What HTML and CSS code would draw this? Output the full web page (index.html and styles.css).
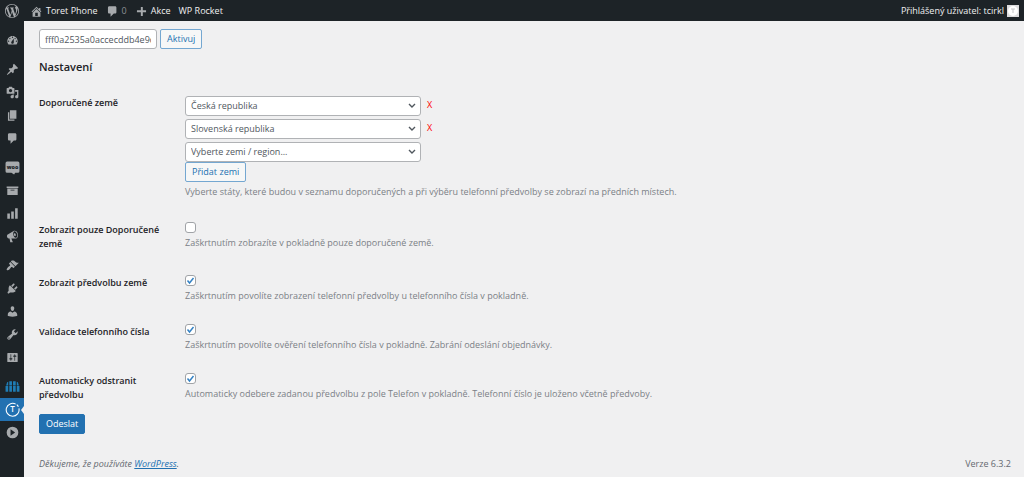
FILE: index.html
```
<!DOCTYPE html>
<html lang="cs">
<head>
    <meta charset="UTF-8">
    <meta name="viewport" content="width=device-width, initial-scale=1.0">
    <title>Toret Phone</title>
    <link rel="stylesheet" href="styles.css">
</head>
<body>
    <header class="adminbar">
        <a class="bar-item bar-logo" href="#" aria-label="WordPress">
            <svg class="icon icon-logo" viewBox="0 0 20 20"><path d="M20 10c0-5.51-4.49-10-10-10C4.48 0 0 4.49 0 10c0 5.52 4.48 10 10 10 5.51 0 10-4.48 10-10zM7.78 15.37L4.37 6.22c.55-.02 1.17-.08 1.17-.08.5-.06.44-1.13-.06-1.11 0 0-1.45.11-2.37.11-.18 0-.37 0-.58-.01C4.12 2.69 6.87 1.11 10 1.11c2.33 0 4.45.87 6.05 2.34-.68-.11-1.65.39-1.65 1.58 0 .74.45 1.36.9 2.1.35.61.55 1.36.55 2.46 0 1.49-1.4 5-1.4 5l-3.03-8.37c.54-.02.82-.17.82-.17.5-.05.44-1.25-.06-1.22 0 0-1.44.12-2.38.12-.87 0-2.33-.12-2.33-.12-.5-.03-.56 1.2-.06 1.22l.92.08 1.26 3.41zM17.41 10c.24-.64.74-1.87.43-4.25.7 1.29 1.05 2.71 1.05 4.25 0 3.29-1.73 6.24-4.4 7.78.97-2.59 1.94-5.2 2.92-7.78zM6.1 18.09C3.12 16.65 1.11 13.53 1.11 10c0-1.3.23-2.48.72-3.59C3.25 10.3 4.67 14.2 6.1 18.09zm4.03-6.63l2.58 6.98c-.86.29-1.76.45-2.71.45-.79 0-1.57-.11-2.29-.33.81-2.38 1.62-4.74 2.42-7.1z"/></svg>
        </a>
        <a class="bar-item" href="#">
            <svg class="icon" viewBox="0 0 20 20"><path d="M16 8.5l1.53 1.53-1.06 1.06L10 4.6l-6.47 6.49-1.06-1.06L10 2.5l4 4v-2h2v4zm-6-2.46l6 5.99V18H4v-5.97zM12 17v-5H8v5h4z"/></svg>
            Toret Phone
        </a>
        <a class="bar-item bar-muted" href="#">
            <svg class="icon" viewBox="0 0 20 20"><path d="M5 2h9c1.1 0 2 .9 2 2v7c0 1.1-.9 2-2 2h-2l-5 5v-5H5c-1.1 0-2-.9-2-2V4c0-1.1.9-2 2-2z"/></svg>
            0
        </a>
        <a class="bar-item" href="#">
            <svg class="icon" viewBox="0 0 20 20"><path d="M17 8v3h-5v6H9v-6H3V8h6V3h3v5h5z"/></svg>
            Akce
        </a>
        <a class="bar-item" href="#">WP Rocket</a>
        <a class="bar-item bar-user" href="#">
            Přihlášený uživatel: tcirkl
            <svg class="avatar" viewBox="0 0 12 12" aria-hidden="true"><rect width="12" height="12" fill="#dcdcde"/><circle cx="6" cy="6" r="5" fill="#fff"/><path d="M4 4h4M6 4v4" stroke="#c3c4c7" stroke-width="1"/></svg>
        </a>
    </header>

    <div class="layout">
        <nav class="menu" aria-label="Hlavní menu">
            <ul class="menu-group">
                <li><a class="menu-item" href="#" aria-label="Nástěnka"><svg class="icon" viewBox="0 0 20 20"><path d="M3.76 16h12.48c1.1-1.37 1.76-3.11 1.76-5 0-4.42-3.58-8-8-8s-8 3.58-8 8c0 1.89.66 3.63 1.76 5zM10 4c.55 0 1 .45 1 1s-.45 1-1 1-1-.45-1-1 .45-1 1-1zM6 6c.55 0 1 .45 1 1s-.45 1-1 1-1-.45-1-1 .45-1 1-1zm8 0c.55 0 1 .45 1 1s-.45 1-1 1-1-.45-1-1 .45-1 1-1zm-5.37 5.55L12 7v6c0 1.1-.9 2-2 2s-2-.9-2-2c0-.57.24-1.08.63-1.45zM4 10c.55 0 1 .45 1 1s-.45 1-1 1-1-.45-1-1 .45-1 1-1zm12 0c.55 0 1 .45 1 1s-.45 1-1 1-1-.45-1-1 .45-1 1-1z"/></svg></a></li>
            </ul>
            <ul class="menu-group">
                <li><a class="menu-item" href="#" aria-label="Příspěvky"><svg class="icon" viewBox="0 0 20 20"><path d="M10.44 3.02l1.82-1.82 6.36 6.35-1.83 1.82c-1.05-.68-2.48-.57-3.41.36l-.75.75c-.92.93-1.04 2.35-.35 3.41l-1.83 1.82-2.41-2.41-2.8 2.79c-.42.42-3.38 2.71-3.8 2.29s1.86-3.39 2.28-3.81l2.79-2.79L4.1 9.36l1.83-1.82c1.05.69 2.48.57 3.4-.36l.75-.75c.93-.92 1.05-2.35.36-3.41z"/></svg></a></li>
                <li><a class="menu-item" href="#" aria-label="Média"><svg class="icon" viewBox="0 0 20 20"><path d="M13 11V4c0-.55-.45-1-1-1h-1.67L9 1H5L3.67 3H2c-.55 0-1 .45-1 1v7c0 .55.45 1 1 1h10c.55 0 1-.45 1-1zM7 4.5c1.38 0 2.5 1.12 2.5 2.5S8.38 9.5 7 9.5 4.5 8.38 4.5 7 5.62 4.5 7 4.5zM14 6h5v10.5c0 1.38-1.12 2.5-2.5 2.5S14 17.88 14 16.5s1.12-2.5 2.5-2.5c.17 0 .34.02.5.05V9h-3V6zm-4 8.05V13h2v3.5c0 1.38-1.12 2.5-2.5 2.5S7 17.88 7 16.5 8.12 14 9.5 14c.17 0 .34.02.5.05z"/></svg></a></li>
                <li><a class="menu-item" href="#" aria-label="Stránky"><svg class="icon" viewBox="0 0 20 20"><path d="M6 15V2h10v13H6zm-1 1h8v2H3V5h2v11z"/></svg></a></li>
                <li><a class="menu-item" href="#" aria-label="Komentáře"><svg class="icon" viewBox="0 0 20 20"><path d="M5 2h9c1.1 0 2 .9 2 2v7c0 1.1-.9 2-2 2h-2l-5 5v-5H5c-1.1 0-2-.9-2-2V4c0-1.1.9-2 2-2z"/></svg></a></li>
            </ul>
            <ul class="menu-group">
                <li><a class="menu-item" href="#" aria-label="WooCommerce"><svg class="icon icon-wide" viewBox="0 0 28 28"><path d="M4 3h20a3 3 0 0 1 3 3v15a3 3 0 0 1-3 3h-5l-2 3-5-3H4a3 3 0 0 1-3-3V6a3 3 0 0 1 3-3z"/><text class="woo-text" x="14" y="17" text-anchor="middle">woo</text></svg></a></li>
                <li><a class="menu-item" href="#" aria-label="Produkty"><svg class="icon" viewBox="0 0 20 20"><path d="M19 4v2H1V4h18zM2 7h16v10H2V7zm11 3V9H7v1h6z"/></svg></a></li>
                <li><a class="menu-item" href="#" aria-label="Analýzy"><svg class="icon" viewBox="0 0 20 20"><path d="M18 18V2h-4v16h4zm-6 0V7H8v11h4zm-6 0v-8H2v8h4z"/></svg></a></li>
                <li><a class="menu-item" href="#" aria-label="Marketing"><svg class="icon" viewBox="0 0 20 20"><path d="M18.15 5.94c.46 1.62.38 3.22-.02 4.48-.42 1.28-1.26 2.18-2.3 2.48-.16.06-.26.06-.4.06-.06.02-.12.02-.18.02-.06.02-.14.02-.22.02h-6.8l2.22 5.5c.02.14-.06.26-.14.34-.08.1-.24.16-.34.16H6.95c-.1 0-.26-.06-.34-.16-.08-.08-.16-.2-.14-.34l-1-5.5H4.25l-.02-.02c-.5.06-1.08-.18-1.54-.62s-.88-1.08-1.06-1.88c-.24-.8-.2-1.56-.02-2.2.18-.62.58-1.08 1.06-1.3l.02-.02 9-5.4c.1-.06.18-.1.24-.16.06-.04.14-.08.24-.12.16-.08.28-.12.5-.18 1.04-.3 2.24.1 3.22.98s1.84 2.24 2.26 3.86zm-2.58 5.98h-.02c.4-.1.74-.34 1.04-.7.58-.7.86-1.76.86-3.04 0-.64-.1-1.3-.28-1.98-.34-1.36-1.02-2.5-1.78-3.24s-1.68-1.1-2.46-.88c-.82.22-1.4.96-1.7 2-.32 1.04-.28 2.36.06 3.72.38 1.36 1 2.5 1.8 3.24.78.74 1.62 1.1 2.48.88zm-2.54-7.08c.22-.04.42-.02.62.04.38.16.76.48 1.02 1s.42 1.2.42 1.78c0 .3-.04.56-.12.8-.18.48-.44.84-.86.94-.34.1-.8-.06-1.14-.4s-.64-.86-.78-1.5c-.18-.62-.12-1.24.02-1.72s.48-.84.82-.94z"/></svg></a></li>
            </ul>
            <ul class="menu-group">
                <li><a class="menu-item" href="#" aria-label="Vzhled"><svg class="icon" viewBox="0 0 20 20"><path d="M14.48 11.06L7.41 3.99l1.5-1.5c.5-.56 2.3-.47 3.51.32 1.21.8 1.43 1.28 2.91 2.1 1.18.64 2.45 1.26 4.45.85zm-.71.71L6.7 4.7 4.93 6.47c-.39.39-.39 1.02 0 1.41l1.06 1.06c.39.39.39 1.03 0 1.42-.6.6-1.43 1.11-2.21 1.69-.35.26-.7.53-1.01.84C1.43 14.23.4 16.08 1.4 17.07c.99 1 2.84-.03 4.18-1.36.31-.31.58-.66.85-1.02.57-.78 1.08-1.61 1.69-2.21.39-.39 1.02-.39 1.41 0l1.06 1.06c.39.39 1.02.39 1.41 0z"/></svg></a></li>
                <li><a class="menu-item" href="#" aria-label="Pluginy"><svg class="icon" viewBox="0 0 20 20"><path d="M13.11 4.36L9.87 7.6 8 5.73l3.24-3.24c.35-.34 1.05-.2 1.56.32.52.51.66 1.21.31 1.55zm-8 1.77l.91-1.12 9.01 9.01-1.19.84c-.71.71-2.63 1.16-3.82 1.16H6.14L4.9 17.26c-.59.59-1.54.59-2.12 0-.59-.58-.59-1.53 0-2.12l1.24-1.24v-3.88c0-1.13.4-3.19 1.09-3.89zm7.26 3.97l3.24-3.24c.34-.35 1.04-.21 1.55.31.52.51.66 1.21.31 1.55l-3.24 3.25z"/></svg></a></li>
                <li><a class="menu-item" href="#" aria-label="Uživatelé"><svg class="icon" viewBox="0 0 20 20"><path d="M10 9.25c-2.27 0-2.73-3.44-2.73-3.44C7 4.02 7.82 2 9.97 2c2.16 0 2.98 2.02 2.71 3.81 0 0-.41 3.44-2.68 3.44zm0 2.57L12.72 10c2.39 0 4.52 2.33 4.52 4.53v2.49s-3.65 1.13-7.24 1.13c-3.65 0-7.24-1.13-7.24-1.13v-2.49c0-2.25 1.94-4.48 4.47-4.48z"/></svg></a></li>
                <li><a class="menu-item" href="#" aria-label="Nástroje"><svg class="icon" viewBox="0 0 20 20"><path d="M16.68 9.77c-1.34 1.34-3.3 1.67-4.95.99l-5.41 6.52c-.99.99-2.59.99-3.58 0s-.99-2.59 0-3.57l6.52-5.42c-.68-1.65-.35-3.61.99-4.95 1.28-1.28 3.12-1.62 4.72-1.06l-2.89 2.89 2.82 2.82 2.86-2.87c.53 1.58.18 3.39-1.08 4.65zM3.81 16.21c.4.39 1.04.39 1.43 0 .4-.4.4-1.04 0-1.43-.39-.4-1.03-.4-1.43 0-.39.39-.39 1.03 0 1.43z"/></svg></a></li>
                <li><a class="menu-item" href="#" aria-label="Nastavení"><svg class="icon" viewBox="0 0 20 20"><path d="M18 16V4c0-.55-.45-1-1-1H3c-.55 0-1 .45-1 1v12c0 .55.45 1 1 1h14c.55 0 1-.45 1-1zM8 11h1c.55 0 1 .45 1 1s-.45 1-1 1H8v1.5c0 .28-.22.5-.5.5s-.5-.22-.5-.5V13H6c-.55 0-1-.45-1-1s.45-1 1-1h1V5.5c0-.28.22-.5.5-.5s.5.22.5.5V11zm5-2h-1c-.55 0-1-.45-1-1s.45-1 1-1h1V5.5c0-.28.22-.5.5-.5s.5.22.5.5V7h1c.55 0 1 .45 1 1s-.45 1-1 1h-1v5.5c0 .28-.22.5-.5.5s-.5-.22-.5-.5V9z"/></svg></a></li>
            </ul>
            <ul class="menu-group">
                <li><a class="menu-item menu-blue" href="#" aria-label="Toret"><svg class="icon icon-wide" viewBox="0 0 28 28"><path d="M8 4h5v8H8zM15 4h5v8h-5zM6 5v7H2l2-6zM22 5v7h4l-2-6z"/><path d="M1 13h5v11H1zM8 13h5v11H8zM15 13h5v11h-5zM22 13h5v11h-5z"/></svg></a></li>
                <li><a class="menu-item menu-active" href="#" aria-label="Toret Phone"><svg class="icon icon-wide" viewBox="0 0 28 28"><path d="M20 4A12 12 0 1 0 26 12" fill="none" stroke="currentColor" stroke-width="2"/><path d="M22 5a12 12 0 0 1 3 4" fill="none" stroke="currentColor" stroke-width="2"/><text class="toret-text" x="14" y="19" text-anchor="middle">T</text></svg></a></li>
                <li><a class="menu-item" href="#" aria-label="Sbalit menu"><svg class="icon" viewBox="0 0 20 20"><path fill-rule="evenodd" d="M10 1a9 9 0 1 1 0 18 9 9 0 0 1 0-18zM7 5v10l7-5z"/></svg></a></li>
            </ul>
        </nav>

        <div class="content">
            <main>
                <form class="license">
                    <input class="field license-key" type="text" value="fff0a2535a0accecddb4e9c8" aria-label="Licenční klíč">
                    <button class="btn" type="button">Aktivuj</button>
                </form>

                <h2 class="title">Nastavení</h2>

                <form class="settings">
                    <div class="row">
                        <label class="row-label" for="country-1">Doporučené země</label>
                        <div class="row-body row-countries">
                            <div class="country">
                                <select class="field select" id="country-1">
                                    <option>Česká republika</option>
                                </select>
                                <button class="remove" type="button">X</button>
                            </div>
                            <div class="country">
                                <select class="field select" aria-label="Druhá země">
                                    <option>Slovenská republika</option>
                                </select>
                                <button class="remove" type="button">X</button>
                            </div>
                            <div class="country">
                                <select class="field select" aria-label="Další země">
                                    <option>Vyberte zemi / region...</option>
                                </select>
                            </div>
                            <button class="btn" type="button">Přidat zemi</button>
                            <p class="desc">Vyberte státy, které budou v seznamu doporučených a při výběru telefonní předvolby se zobrazí na předních místech.</p>
                        </div>
                    </div>
                    <div class="row">
                        <label class="row-label" for="only">Zobrazit pouze Doporučené země</label>
                        <div class="row-body">
                            <input class="check" type="checkbox" id="only">
                            <p class="desc">Zaškrtnutím zobrazíte v pokladně pouze doporučené země.</p>
                        </div>
                    </div>
                    <div class="row">
                        <label class="row-label" for="prefix">Zobrazit předvolbu země</label>
                        <div class="row-body">
                            <input class="check" type="checkbox" id="prefix" checked>
                            <p class="desc">Zaškrtnutím povolíte zobrazení telefonní předvolby u telefonního čísla v pokladně.</p>
                        </div>
                    </div>
                    <div class="row">
                        <label class="row-label" for="validate">Validace telefonního čísla</label>
                        <div class="row-body">
                            <input class="check" type="checkbox" id="validate" checked>
                            <p class="desc">Zaškrtnutím povolíte ověření telefonního čísla v pokladně. Zabrání odeslání objednávky.</p>
                        </div>
                    </div>
                    <div class="row row-last">
                        <label class="row-label" for="strip">Automaticky odstranit předvolbu</label>
                        <div class="row-body">
                            <input class="check" type="checkbox" id="strip" checked>
                            <p class="desc">Automaticky odebere zadanou předvolbu z pole Telefon v pokladně. Telefonní číslo je uloženo včetně předvoby.</p>
                        </div>
                    </div>
                    <button class="btn btn-primary" type="button">Odeslat</button>
                </form>
            </main>

            <footer class="footer">
                <em>Děkujeme, že používáte <a href="#">WordPress</a>.</em>
                <span>Verze 6.3.2</span>
            </footer>
        </div>
    </div>
</body>
</html>
```
FILE: styles.css
```
* {
    margin: 0;
    padding: 0;
    box-sizing: border-box;
}

body {
    font-family: "Segoe UI", "Open Sans", "Noto Sans", sans-serif;
    font-size: 9px;
    line-height: 14px;
    color: #3c434a;
    background: #f0f0f1;
    min-height: 100vh;
    display: flex;
    flex-direction: column;
}

button,
input,
select {
    font: inherit;
}

.icon {
    width: 13px;
    height: 13px;
    fill: currentColor;
    flex: none;
}

.icon-logo {
    width: 14px;
    height: 14px;
}

.icon-wide {
    width: 15px;
    height: 15px;
}

/* top bar */
.adminbar {
    display: flex;
    align-items: center;
    gap: 8px;
    height: 21px;
    padding: 1px 5px 0;
    background: #1d2327;
}

.bar-item {
    display: flex;
    align-items: center;
    gap: 3px;
    color: #f0f0f1;
    text-decoration: none;
    white-space: nowrap;
}

.bar-logo {
    margin-right: 3px;
}

.bar-item .icon {
    color: #a7aaad;
}

.bar-muted {
    color: #8c8f94;
}

.bar-user {
    margin-left: auto;
}

.avatar {
    width: 12px;
    height: 12px;
}

.layout {
    flex: 1;
    display: flex;
}

/* side menu */
.menu {
    flex: none;
    width: 24px;
    padding-top: 8px;
    display: flex;
    flex-direction: column;
    gap: 6px;
    background: #1d2327;
}

.menu-group {
    list-style: none;
}

.menu-item {
    position: relative;
    display: flex;
    align-items: center;
    justify-content: center;
    height: 23px;
    color: #a7aaad;
}

.menu-blue {
    color: #1f7db5;
}

.menu-active {
    color: #fff;
    background: #2271b1;
}

.menu-active::after {
    content: "";
    position: absolute;
    right: 0;
    border: 4px solid transparent;
    border-left-width: 0;
    border-right: 3px solid #f0f0f1;
}

.woo-text {
    font-size: 10px;
    font-weight: 800;
    fill: #1d2327;
}

.toret-text {
    font-size: 15px;
    font-weight: 600;
}

/* content */
.content {
    flex: 1;
    display: flex;
    flex-direction: column;
    padding: 8px 13px 6px 15px;
}

.license {
    display: flex;
    gap: 3px;
}

.field {
    height: 20px;
    padding: 0 5px;
    color: #50575e;
    background: #fff;
    border: 1px solid #b0b2b5;
    border-radius: 3px;
}

.license-key {
    width: 118px;
}

.btn {
    height: 20px;
    padding: 0 6px;
    color: #2271b1;
    background: #f6f7f7;
    border: 1px solid #74a7d1;
    border-radius: 2px;
    cursor: pointer;
}

.btn-primary {
    color: #fff;
    background: #2271b1;
    border-color: #2271b1;
}

.title {
    margin: 10px 0 11px;
    font-size: 11px;
    font-weight: 600;
    line-height: 16px;
    color: #1d2327;
}

.row {
    display: grid;
    grid-template-columns: 130px 1fr;
    column-gap: 16px;
}

.row-label {
    padding: 10px 0 15px;
    font-weight: 600;
    color: #1d2327;
}

.row-body {
    padding: 9px 0 12px;
}

.row-countries {
    padding: 10px 0 14px;
}

.row-last .row-label {
    padding-bottom: 12px;
}

.country {
    display: flex;
    gap: 6px;
    margin-bottom: 3px;
}

.country:nth-child(3) {
    margin-bottom: 0;
}

.select {
    width: 236px;
    appearance: none;
    background: #fff url("data:image/svg+xml,%3Csvg xmlns='http://www.w3.org/2000/svg' viewBox='0 0 8 6'%3E%3Cpath d='M1 1l3 3 3-3' fill='none' stroke='%2350575e' stroke-width='1.4'/%3E%3C/svg%3E") no-repeat right 4px center / 8px 6px;
}

.remove {
    height: 18px;
    color: #f00;
    background: none;
    border: none;
    cursor: pointer;
}

.check {
    display: block;
    width: 11px;
    height: 11px;
    appearance: none;
    background: #fff;
    border: 1px solid #a0a3a7;
    border-radius: 3px;
}

.check:checked {
    background: #fff url("data:image/svg+xml,%3Csvg xmlns='http://www.w3.org/2000/svg' viewBox='0 0 9 9'%3E%3Cpath d='M1.5 4.5l2 2.5 4-5' fill='none' stroke='%233582c4' stroke-width='1.5'/%3E%3C/svg%3E") no-repeat center / 9px 9px;
}

.desc {
    margin-top: 3px;
    color: #7b8086;
}

.footer {
    display: flex;
    justify-content: space-between;
    margin-top: auto;
    color: #646970;
}

.footer a {
    color: #2271b1;
}
```
